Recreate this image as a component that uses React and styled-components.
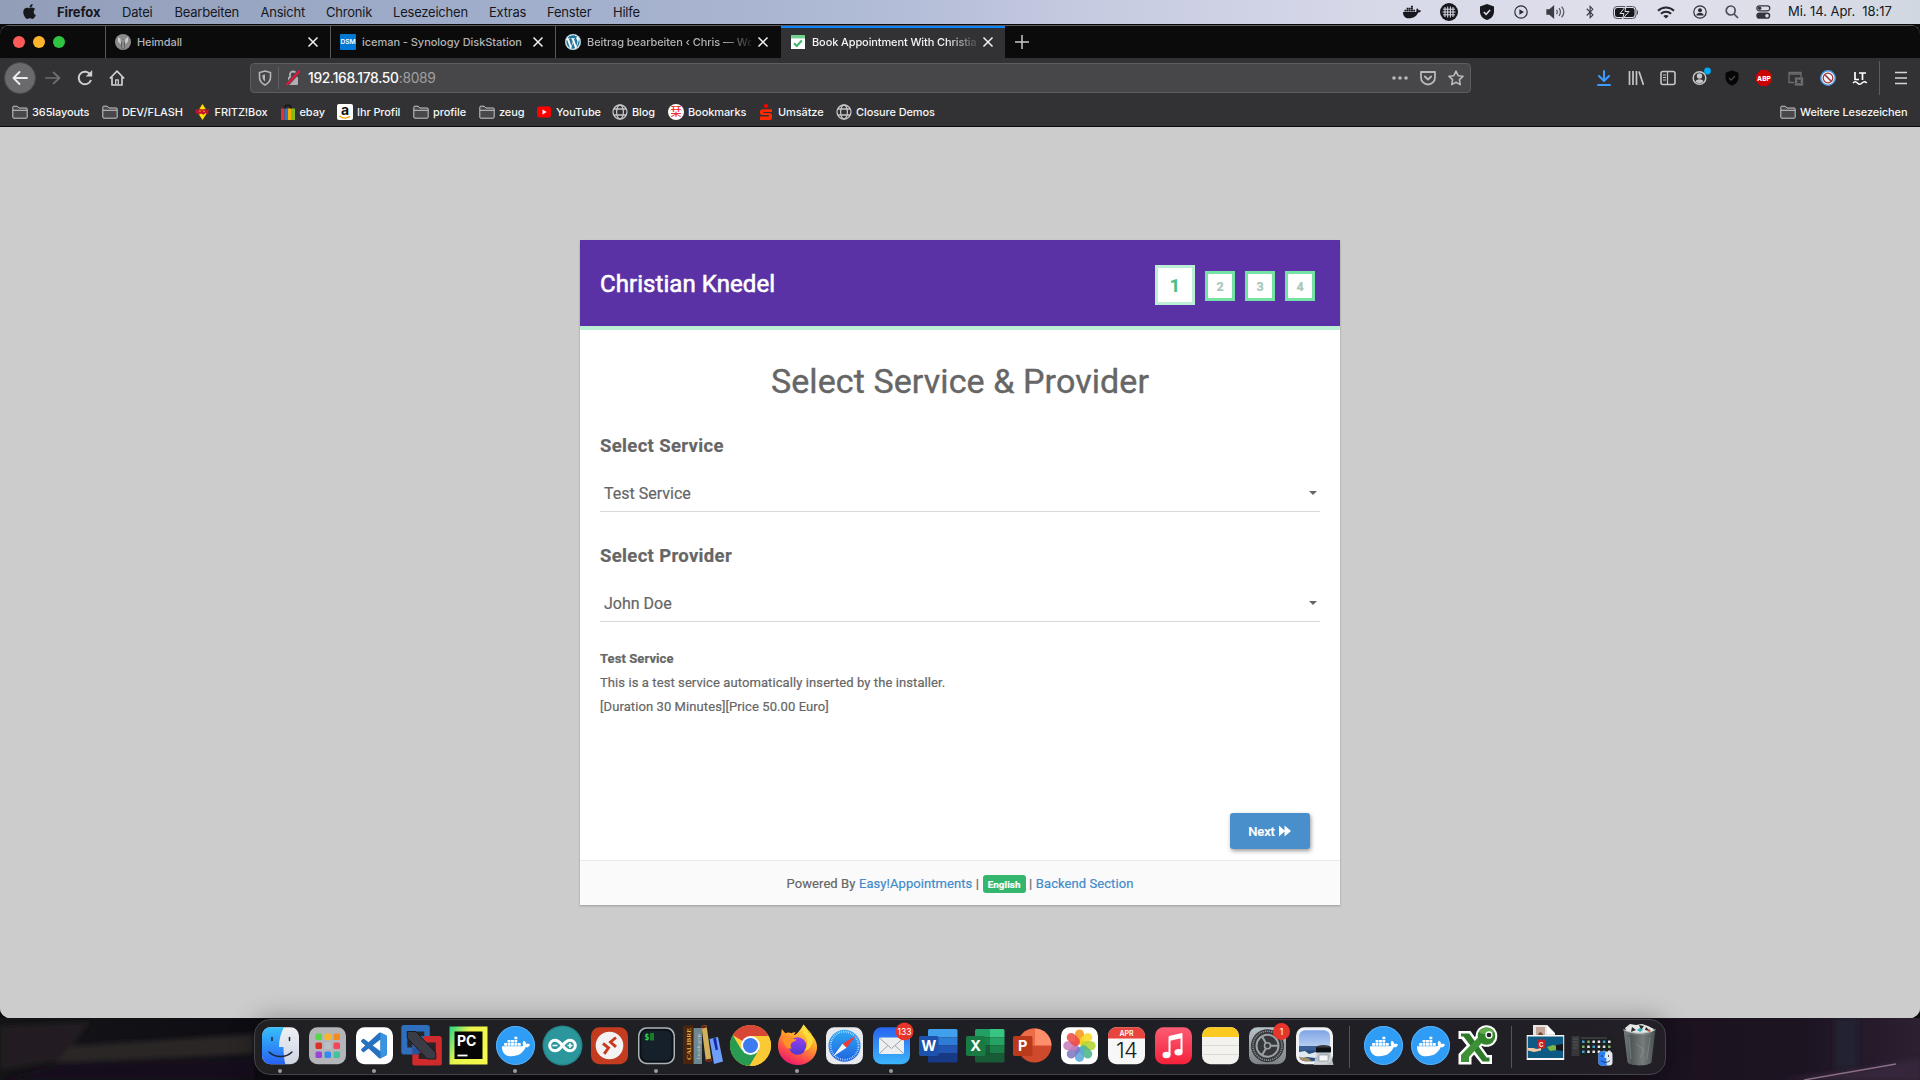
import React from "react";
import styled, { createGlobalStyle } from "styled-components";
import { FaApple, FaDocker, FaWordpress, FaBluetoothB } from "react-icons/fa";

const UI = `Inter, "Open Sans", "Liberation Sans", sans-serif`;

const Global = createGlobalStyle`
  * { box-sizing: border-box; }
  html, body { margin: 0; padding: 0; overflow: hidden; background: #0d0c10; }
  svg { display: block; flex: none; }
`;

const Desktop = styled.div`
  width: 1920px;
  height: 1080px;
  display: flex;
  flex-direction: column;
  overflow: hidden;
  background: #0c0b10;
  font-family: ${UI};
`;

/* ---------- menu bar ---------- */
const MenuBar = styled.header`
  height: 24px;
  flex: none;
  display: flex;
  align-items: center;
  justify-content: space-between;
  padding: 0 19px 0 21px;
  color: #16181d;
  font-size: 13px;
  background: linear-gradient(90deg, #929db8 0%, #9dabc8 20%, #a8b4d0 38%, #b2bcd6 46%, #c6cbe1 57%, #d6d8e8 71%, #dfdfeb 84%, #dedee9 92%, #cfd7e0 100%);
`;
const MenuGroup = styled.div`
  display: flex;
  align-items: center;
  height: 24px;
`;
const MenuItem = styled.span`
  width: ${(p) => p.$w}px;
  white-space: nowrap;
  letter-spacing: ${(p) => p.$ls ?? -0.22}px;
  font-weight: ${(p) => (p.$bold ? 700 : 400)};
  line-height: 24px;
`;
const AppleSlot = styled.span`
  width: 36px;
  padding-bottom: 2px;
`;
const TrayIcon = styled.span`
  width: ${(p) => p.$w}px;
  margin-left: ${(p) => p.$gap}px;
  display: flex;
  justify-content: center;
`;
const Clock = styled.span`
  margin-left: 17px;
  width: 113px;
  line-height: 22px;
  padding-bottom: 2px;
  white-space: pre;
  letter-spacing: -0.05px;
`;

/* ---------- browser window ---------- */
const Window = styled.main`
  height: 994px;
  flex: none;
  display: flex;
  flex-direction: column;
  border-radius: 10px;
  overflow: hidden;
  background: #ccc;
  border-top: 1px solid #08080a;
`;
const TabBar = styled.div`
  height: 33px;
  flex: none;
  display: flex;
  background: #0b0b0c;
  border-top: 1px solid #5c5c5e;
`;
const Lights = styled.div`
  width: 105px;
  padding: 10px 0 0 13px;
  display: flex;
  gap: 8px;
`;
const Light = styled.i`
  width: 12px;
  height: 12px;
  border-radius: 50%;
  background: ${(p) => p.$c};
`;
const Tab = styled.div`
  width: ${(p) => p.$w}px;
  display: flex;
  align-items: center;
  gap: 6px;
  padding: 0 ${(p) => p.$pr ?? 11}px 0 9px;
  font-size: 11px;
  font-weight: 500;
  color: ${(p) => (p.$active ? "#f4f4f5" : "#b3b3b5")};
  background: ${(p) => (p.$active ? "#323234" : "transparent")};
  border-left: ${(p) => (p.$active ? "0" : "1px solid #59595b")};
  box-shadow: ${(p) => (p.$active ? "inset 0 2px 0 #0a84ff" : "none")};
`;
const TabTitle = styled.span`
  flex: 1;
  min-width: 0;
  white-space: nowrap;
  letter-spacing: ${(p) => p.$ls ?? 0}px;
  mask-image: ${(p) => (p.$fade ? "linear-gradient(90deg, #000 82%, rgba(0, 0, 0, 0.15) 100%)" : "none")};
`;
const NewTab = styled.div`
  width: 34px;
  display: flex;
  align-items: center;
  justify-content: center;
`;

const NavBar = styled.div`
  height: 40px;
  flex: none;
  display: flex;
  align-items: center;
  padding: 0 3px 0 4px;
  background: #323234;
`;
const NavButtons = styled.div`
  width: 246px;
  display: flex;
  align-items: center;
`;
const Back = styled.span`
  width: 32px;
  height: 32px;
  margin-right: 1px;
  border-radius: 50%;
  background: #6a6a6c;
  border: 1px solid #4b4b4d;
  display: flex;
  align-items: center;
  justify-content: center;
`;
const NavIcon = styled.span`
  width: 32px;
  display: flex;
  justify-content: center;
`;
const UrlBar = styled.div`
  width: 1221px;
  height: 30px;
  display: flex;
  align-items: center;
  background: #474749;
  border: 1px solid #5d5d5f;
  border-radius: 4px;
  padding: 0 0 0 6px;
`;
const UrlIcon = styled.span`
  width: ${(p) => p.$w}px;
  display: flex;
  justify-content: center;
`;
const UrlRule = styled.i`
  width: 1px;
  height: 22px;
  margin-left: 5px;
  background: #606066;
`;
const Url = styled.span`
  flex: 1;
  margin-left: 2px;
  line-height: 17px;
  padding-top: 1px;
  font-size: 13.8px;
  letter-spacing: -0.3px;
  color: #a0a0a2;
  b { font-weight: 500; color: #fbfbfc; }
`;
const UrlActions = styled.div`
  display: flex;
  width: 84px;
`;
const ActionIcon = styled.span`
  width: 28px;
  display: flex;
  justify-content: center;
`;
const Tools = styled.div`
  flex: 1;
  display: flex;
  align-items: center;
  justify-content: flex-end;
`;
const ToolRule = styled.i`
  width: 1px;
  height: 34px;
  margin: 0 5px 0 3px;
  background: #5c5c5e;
`;

const Bookmarks = styled.div`
  height: 29px;
  flex: none;
  display: flex;
  align-items: center;
  padding: 0 11px 1px 12px;
  background: #323234;
  border-bottom: 1px solid #0a0a0b;
  color: #f5f5f6;
  font-size: 11px;
  font-weight: 500;
`;
const Bookmark = styled.span`
  width: ${(p) => p.$w}px;
  margin-left: ${(p) => (p.$end ? "auto" : 0)};
  display: flex;
  align-items: center;
  gap: 4px;
  white-space: nowrap;
  letter-spacing: -0.1px;
`;

/* ---------- booking page ---------- */
const Page = styled.section`
  flex: 1;
  display: flex;
  flex-direction: column;
  align-items: center;
  padding-top: 113px;
  background: #ccc;
  font-family: Roboto, "Liberation Sans", sans-serif;
  color: #666;
  -webkit-text-stroke: 0.2px;
`;
const Card = styled.div`
  width: 760px;
  height: 665px;
  display: flex;
  flex-direction: column;
  background: #fff;
  box-shadow: 0 1px 2px rgba(0, 0, 0, 0.24);
`;
const CardHeader = styled.div`
  height: 90px;
  flex: none;
  display: flex;
  justify-content: space-between;
  padding: 0 25px 0 20px;
  background: #5a32a5;
  border-bottom: 4px solid #bdefd5;
`;
const Company = styled.span`
  padding-top: 30px;
  font-size: 24px;
  line-height: 28px;
  letter-spacing: 0.07px;
  color: #fff;
  font-weight: 400;
  -webkit-text-stroke: 0.6px #fff;
`;
const Steps = styled.div`
  display: flex;
  gap: 10px;
  padding-top: 25px;
`;
const Step = styled.span`
  width: ${(p) => (p.$active ? 40 : 30)}px;
  height: ${(p) => (p.$active ? 40 : 30)}px;
  margin-top: ${(p) => (p.$active ? 0 : 6)}px;
  border: 3px solid ${(p) => (p.$active ? "#bdefd7" : "#75e2a5")};
  background: #fff;
  color: ${(p) => (p.$active ? "#49bd82" : "#a6c8b9")};
  font-size: ${(p) => (p.$active ? 18 : 12.5)}px;
  font-weight: 700;
  display: flex;
  align-items: center;
  justify-content: center;
  padding-top: 1px;
`;
const CardBody = styled.div`
  flex: 1;
  display: flex;
  flex-direction: column;
  padding: 0 20px;
`;
const Title = styled.h2`
  margin: 30px 0 0;
  text-align: center;
  font-size: 34px;
  line-height: 42px;
  font-weight: 400;
  letter-spacing: 0.1px;
  -webkit-text-stroke: 0.4px;
`;
const Label = styled.label`
  margin-top: ${(p) => p.$mt}px;
  font-size: 18.5px;
  letter-spacing: 0.34px;
  line-height: 24px;
  font-weight: 700;
`;
const Select = styled.div`
  height: 37px;
  margin-top: 17px;
  padding: 0 3px 0 4px;
  display: flex;
  align-items: center;
  justify-content: space-between;
  border-bottom: 1px solid #d9d9d9;
  font-size: 16px;
`;
const Caret = styled.i`
  border: 4px solid transparent;
  border-top-color: #666;
  border-bottom: 0;
`;
const Description = styled.div`
  margin-top: 25px;
  font-size: 13px;
  letter-spacing: 0.09px;
  line-height: 24px;
`;
const NextRow = styled.div`
  flex: 1;
  display: flex;
  justify-content: flex-end;
  align-items: flex-end;
  padding: 0 10px 11px 0;
`;
const NextButton = styled.button`
  width: 80px;
  height: 36px;
  padding: 0 1px 0 0;
  border: 0;
  border-radius: 3px;
  background: #488fcc;
  color: #fff;
  font: 500 13px Roboto, sans-serif;
  letter-spacing: -0.1px;
  display: flex;
  align-items: center;
  justify-content: center;
  gap: 4px;
  box-shadow: 1px 2px 4px rgba(0, 0, 0, 0.4);
`;
const Footer = styled.footer`
  height: 45px;
  flex: none;
  display: flex;
  align-items: center;
  justify-content: center;
  gap: 3.5px;
  padding-top: 1px;
  background: #fafafa;
  border-top: 1px solid #eaeaea;
  font-size: 13px;
  letter-spacing: 0.07px;
`;
const Link = styled.a`
  color: #428bca;
`;
const Language = styled.span`
  width: 43px;
  height: 18px;
  border-radius: 3px;
  background: #35b66f;
  color: #fff;
  font-size: 9.75px;
  font-weight: 700;
  display: flex;
  align-items: center;
  justify-content: center;
  padding-top: 1px;
`;

/* ---------- dock ---------- */
const DockArea = styled.div`
  height: 62px;
  flex: none;
  position: relative;
  display: flex;
  justify-content: center;
  align-items: flex-start;
  padding-top: 1px;
  background: linear-gradient(90deg, #151416 0%, #111015 8%, #0d0c12 14%, #0f0d14 80%, #1c1220 88%, #1d1422 94%, #2c2031 100%);
`;
const Wallpaper = styled.svg`
  position: absolute;
  left: 0;
  top: 0;
`;
const Dock = styled.nav`
  position: relative;
  height: 56px;
  display: flex;
  padding: 0 2px;
  border: 1px solid #454448;
  border-radius: 16px;
  background: linear-gradient(90deg, #212124 0%, #1e1f24 60%, #221f26 100%);
  box-shadow: 0 0 26px rgba(0, 0, 0, 0.32);
`;
const DockSlot = styled.svg`
  overflow: visible;
  margin-top: -1px;
`;
const DockGap = styled.i`
  width: ${(p) => p.$w}px;
  display: flex;
  justify-content: center;
  padding-top: 6px;
  &::before { content: ""; width: 1px; height: 42px; background: #55545a; }
`;

/* ---------- icons ---------- */
const Svg = ({ s = 16, w, h, children, ...p }) => (
  <svg width={w ?? s} height={h ?? s} viewBox={`0 0 ${w ?? s} ${h ?? s}`} fill="none" {...p}>{children}</svg>
);
const Close = () => (
  <Svg s={12} stroke="#f2f2f2" strokeWidth="1.5"><path d="M1.5 1.5l9 9M10.5 1.5l-9 9" /></Svg>
);
const Folder = () => (
  <Svg stroke="#c9c9cb" strokeWidth="1"><path d="M.8 13.2V3.2a1 1 0 0 1 1-1h3.4l1.6 1.8h7.4a1 1 0 0 1 1 1v8.2a1 1 0 0 1-1 1H1.8a1 1 0 0 1-1-1zM1 6.3h14" fill="#48484a" /></Svg>
);
const Globe = () => (
  <Svg stroke="#c4c4c6" strokeWidth="1.3"><circle cx="8" cy="8" r="7" /><ellipse cx="8" cy="8" rx="3.4" ry="7" /><path d="M2 5h12M2 11h12" /></Svg>
);
const Fritz = () => (
  <Svg w={17} h={16}><path d="M8.5 0l5.200 8-5.200 8-5.200-8z" fill="#ffe000" /><path d="M1 5.5l3 .2 1.5-1 3 .8 3-.8 1.5 1.2 3-.8-2 2.600 1 2.400-4-.8-1.5 1.800-2-1.600-2.500 1-1-1.600-1.800.8z" fill="#c3142d" /><path d="M5 7h2M9 7l2 .5" stroke="#ffe000" strokeWidth=".7" /></Svg>
);
const Ebay = () => (
  <Svg><path d="M5 5V3.200C5 .6 11 .6 11 3.200V5" stroke="#151515" strokeWidth="1.600" /><path d="M1 4.500h3.500V16H1z" fill="#e43137" /><path d="M4.500 4.500H8V16H4.500z" fill="#2f78c4" /><path d="M8 4.500h3.800V16H8z" fill="#f5af02" /><path d="M11.800 4.500H15V16h-3.200z" fill="#86b817" /></Svg>
);
const Amazon = () => (
  <Svg overflow="visible"><rect width="16" height="16" rx="2" fill="#fff" /><text x="8" y="10.800" textAnchor="middle" fontSize="14" fontWeight="700" fontFamily={UI} fill="#111">a</text><path d="M2.500 12c3.500 2.600 7.500 2.500 10.500.4" stroke="#f90" strokeWidth="1.300" /></Svg>
);
const YouTube = () => (
  <Svg><rect x="1" y="2.500" width="14" height="11" rx="2.500" fill="#f00" /><path d="M6.500 5.600v5l4.200-2.500z" fill="#fff" /></Svg>
);
const BookmarksLogo = () => (
  <Svg overflow="visible"><circle cx="8" cy="8" r="8" fill="#fff" /><text x="8" y="12" textAnchor="middle" fontSize="11" fontFamily="Noto Sans CJK JP, sans-serif" fill="#f03030">栞</text></Svg>
);
const Sparkasse = () => (
  <Svg><circle cx="8" cy="2" r="2" fill="#f00" /><path d="M14 5.200H4.600A2.600 2.600 0 0 0 2 7.800v.6A2.600 2.600 0 0 0 4.600 11h6.200v1.400H2V16h9.400A2.600 2.600 0 0 0 14 13.400v-2A2.600 2.600 0 0 0 11.400 9H5.500V7.900H14z" fill="#ff2a00" /></Svg>
);
const HeimdallLogo = () => (
  <Svg><circle cx="8" cy="8" r="8" fill="#8b8b8b" /><path d="M3 3c-.5 4 .5 6 3 7l-.5-5zM13 3c.5 4-.5 6-3 7l.5-5z" fill="#d0d0d0" /><path d="M6 9l2-4 2 4-.5 5.500h-3z" fill="#555" /><path d="M8 6v8" stroke="#c5c5c5" /></Svg>
);
const DsmLogo = () => (
  <Svg><rect width="16" height="16" rx="1" fill="#0078d4" /><text x="8" y="10.400" textAnchor="middle" fontSize="6.600" fontWeight="600" fontFamily={UI} fill="#fff">DSM</text></Svg>
);
const WpLogo = () => (
  <Svg><circle cx="8" cy="8" r="8" fill="#fff" /><FaWordpress size={16} color="#21759b" /></Svg>
);
const BookingLogo = () => (
  <Svg><rect x="1" y="1" width="14" height="14" fill="#fff" /><rect x="1" y="1" width="14" height="3.400" fill="#6fd08f" /><path d="M4 9.200l2.800 2.800 5-5.500" stroke="#3cb56c" strokeWidth="2" /></Svg>
);

const Tray = () => (
  <>
    <TrayIcon $w={20} $gap={0}><FaDocker size={18} /></TrayIcon>
    <TrayIcon $w={18} $gap={18}><Svg s={18}><circle cx="9" cy="9" r="9" fill="#16181d" /><path d="M3 6.200h12M2.500 9h13M3 11.800h12M5 4v10M7.700 3.500v11M10.400 3.500v11M13 4v10" stroke="#dcdce8" strokeWidth="1" /></Svg></TrayIcon>
    <TrayIcon $w={16} $gap={21}><Svg><path d="M8 0l7 2.500v5C15 12 12 14.800 8 16 4 14.800 1 12 1 7.500v-5z" fill="#16181d" /><path d="M4.800 8l2.300 2.300 4-4.300" stroke="#dcdce8" strokeWidth="1.500" /></Svg></TrayIcon>
    <TrayIcon $w={14} $gap={19.5}><Svg s={14} stroke="#2b2d33" strokeWidth="1.200"><circle cx="7" cy="7" r="6.200" /><path d="M5.400 4.200v5.600L10 7z" fill="#2b2d33" stroke="none" /></Svg></TrayIcon>
    <TrayIcon $w={20} $gap={17.5}><Svg w={20} h={14} strokeWidth="1.300"><path d="M1 5h2.500L7.500 1.500v11L3.500 9H1z" fill="#3b3d45" stroke="#3b3d45" /><path d="M10.500 4.800c1 1.400 1 3 0 4.400M13 3.200c1.800 2.300 1.800 5.300 0 7.600M15.700 1.600c2.600 3.300 2.600 7.500 0 10.800" stroke="#5b5d67" /></Svg></TrayIcon>
    <TrayIcon $w={12} $gap={18}><FaBluetoothB size={14} color="#3b3d45" /></TrayIcon>
    <TrayIcon $w={26} $gap={17.5}><Svg w={26} h={13}><rect x=".5" y=".5" width="22.500" height="12" rx="3.500" stroke="#54565e" /><rect x="2" y="2" width="19.500" height="9" rx="2.200" fill="#16181d" /><path d="M13 0L7 7.500h4L9.500 13l6.500-7.500h-4z" fill="#16181d" stroke="#dcdce8" strokeWidth="1" /><path d="M24.500 4.500v4" stroke="#54565e" /></Svg></TrayIcon>
    <TrayIcon $w={18} $gap={17.5}><Svg w={18} h={13} stroke="#26282e" strokeWidth="1.900"><path d="M1 4.800c4.500-4.400 11.500-4.400 16 0M3.900 7.800c2.900-2.800 7.300-2.800 10.200 0" /><path d="M9 12.500L6.300 9.900c1.600-1.300 3.800-1.300 5.400 0z" fill="#26282e" stroke="none" /></Svg></TrayIcon>
    <TrayIcon $w={14} $gap={18}><Svg s={14}><circle cx="7" cy="7" r="6.200" stroke="#2b2d33" strokeWidth="1.200" /><circle cx="7" cy="5.300" r="2" fill="#2b2d33" /><path d="M3.300 10.500c0-3.600 7.400-3.600 7.400 0z" fill="#2b2d33" /></Svg></TrayIcon>
    <TrayIcon $w={14} $gap={18.5}><Svg s={14} stroke="#4b4d55" strokeWidth="1.700"><circle cx="5.700" cy="5.500" r="4.500" /><path d="M9 9l4 4" /></Svg></TrayIcon>
    <TrayIcon $w={15} $gap={17}><Svg w={15} h={14}><rect x=".8" y=".8" width="13" height="5" rx="2.500" stroke="#33353c" strokeWidth="1.200" /><circle cx="3.600" cy="3.300" r="1.800" fill="#33353c" /><rect x=".3" y="7.600" width="14" height="6.200" rx="3.100" fill="#33353c" /><circle cx="11" cy="10.700" r="1.800" fill="#dcdce8" /></Svg></TrayIcon>
  </>
);

const tabs = [
  { title: "Heimdall", icon: <HeimdallLogo />, w: 225, ls: -0.1 },
  { title: "iceman - Synology DiskStation", icon: <DsmLogo />, w: 225, ls: -0.04 },
  { title: "Beitrag bearbeiten ‹ Chris — Wo", icon: <WpLogo />, w: 226, pr: 12, fade: true, ls: -0.08 },
  { title: "Book Appointment With Christia", icon: <BookingLogo />, w: 224, fade: true, active: true, ls: -0.11 },
];
const menus = [["Datei", 52.5], ["Bearbeiten", 86], ["Ansicht", 65.5], ["Chronik", 67], ["Lesezeichen", 96], ["Extras", 58], ["Fenster", 66], ["Hilfe", 40]];
const bookmarks = [
  ["365layouts", <Folder />, 90], ["DEV/FLASH", <Folder />, 91.5], ["FRITZ!Box", <Fritz />, 86], ["ebay", <Ebay />, 57.5],
  ["Ihr Profil", <Amazon />, 76], ["profile", <Folder />, 66], ["zeug", <Folder />, 57], ["YouTube", <YouTube />, 76],
  ["Blog", <Globe />, 56], ["Bookmarks", <BookmarksLogo />, 90], ["Umsätze", <Sparkasse />, 78], ["Closure Demos", <Globe />, 110],
];

const Whale = ({ deep = "#2f9cf5" }) => (
  <>
    <circle cx="23.500" cy="26.500" r="19.500" fill={deep} />
    <circle cx="23.500" cy="26.500" r="19" stroke="#6db8f5" strokeWidth=".7" />
    <FaDocker x={10} y={13.5} size={28} color="#fff" />
  </>
);
const Badge = ({ children, wide }) => (
  <g>
    <circle cx={wide ? 36.5 : 37.5} cy="12.500" r={wide ? 9 : 8.5} fill="#e8352c" />
    <text x={wide ? 36.5 : 37.5} y="15.800" textAnchor="middle" fontSize={wide ? 8.5 : 9.5} fontFamily={UI} fill="#fff">{children}</text>
  </g>
);
const Tile = ({ fill }) => <rect x="5" y="8.300" width="37" height="37" rx="8.500" fill={fill} />;
const Grad = ({ id, a, b, h }) => (
  <linearGradient id={id} x1="0" y1="0" x2={h ? 1 : 0} y2={h ? 0 : 1}><stop stopColor={a} /><stop offset="1" stopColor={b} /></linearGradient>
);
const Office = ({ letter, box, shades }) => (
  <g transform="translate(-1 0)">
    <clipPath id={`of${letter}`}><rect x="14" y="10" width="29.500" height="33.500" rx="1.500" /></clipPath>
    <g clipPath={`url(#of${letter})`}>
      {shades.map(([x, y, w, h, c], i) => <rect key={i} x={x} y={y} width={w} height={h} fill={c} />)}
    </g>
    <rect x="5" y="17" width="19.500" height="20" rx="1.800" fill={box} />
    <text x="14.700" y="31.800" textAnchor="middle" fontSize="14.500" fontWeight="700" fontFamily={UI} fill="#fff">{letter}</text>
  </g>
);

const petals = ["#f7981d", "#f9d923", "#b3d334", "#4fb58a", "#58a8dd", "#8079c4", "#c77dbb", "#ee4b46"];
const pads = ["#57d64b", "#fbb526", "#f58a1d", "#dc2f26", "#b9c0c7", "#f4445c", "#9a45d8", "#2f8df5", "#45c39c"];

const dockLeft = [
  { dot: true, art: <><defs><Grad id="fi" a="#36c0fc" b="#2760f2" /><Grad id="fg" a="#eef0f4" b="#cfd4e2" /><clipPath id="fc"><rect x="5" y="8.300" width="37" height="37" rx="8.500" /></clipPath></defs><g clipPath="url(#fc)"><rect x="5" y="8" width="37" height="38" fill="url(#fg)" /><path d="M5 8h22c-3 6-5 12-5 20h4.500c0 6 .5 12 2 18H5z" fill="url(#fi)" /></g><path d="M15 18.500v3M32.500 18.500v3M12 33c6 6 17 6 23 0" stroke="#1c2638" strokeWidth="1.500" strokeLinecap="round" /></> },
  { art: <><Tile fill="#b4b5b8" />{pads.map((c, i) => <rect key={i} x={11.5 + (i % 3) * 9} y={14.5 + Math.floor(i / 3) * 9} width="6.500" height="6.500" rx="1.500" fill={c} />)}</> },
  { dot: true, art: <><Tile fill="#fff" /><g transform="translate(10 13.500) scale(1.080)"><path d="M23.150 2.587L18.210.21a1.494 1.494 0 0 0-1.705.29l-9.460 8.630-4.120-3.128a.999.999 0 0 0-1.276.057L.327 7.261A1 1 0 0 0 .326 8.740L3.899 12 .326 15.260a1 1 0 0 0 .001 1.479L1.650 17.940a.999.999 0 0 0 1.276.057l4.120-3.128 9.460 8.630a1.492 1.492 0 0 0 1.704.290l4.942-2.377A1.500 1.500 0 0 0 24 20.060V3.939a1.500 1.500 0 0 0-.850-1.352zm-5.146 14.861L10.826 12l7.178-5.448v10.896z" fill="#2472c0" /><path d="M18 .1l5.200 2.500A1.500 1.500 0 0 1 24 3.940v16.120a1.500 1.500 0 0 1-.85 1.350L18 23.900z" fill="#3b94e0" /></g></> },
  { art: <g transform="translate(-.7 0)"><rect x="4" y="6" width="28.500" height="29.500" rx="2.500" fill="#2f6fbd" /><rect x="15" y="17" width="29.500" height="29.500" rx="2.500" fill="#cf2a2c" /><path d="M15 17h12.500L15 33z" fill="#2a62ae" /><path d="M15 29h7v6.500h-7z" fill="#24559d" /><path d="M10 12.500h17V17H15v11.500h-5z" fill="#25272f" /><path d="M26 23.500h12.500v16.500H21.500V34H26z" fill="#2b2326" /><path d="M10 12.500h8.500L38.500 34v6H30L10 19z" fill="#3a3d46" stroke="#1b1c22" strokeWidth="1" /></g> },
  { art: <><defs><linearGradient id="py" x1="0" y1="0" x2="1" y2=".5"><stop stopColor="#21d789" /><stop offset=".45" stopColor="#e8f34c" /><stop offset="1" stopColor="#f6f84a" /></linearGradient></defs><rect x="4.500" y="7.500" width="38" height="38" fill="url(#py)" /><rect x="9.500" y="12.500" width="28" height="27.500" fill="#050505" /><text x="12" y="26.500" fontSize="14" fontWeight="700" fontFamily={UI} fill="#fff">PC</text><path d="M12.500 36.500h10" stroke="#fff" strokeWidth="1.800" /></> },
  { dot: true, art: <Whale /> },
  { art: <><circle cx="23.500" cy="26.500" r="20" fill="#23848a" /><circle cx="23.500" cy="26.500" r="18.600" fill="#2b979c" /><path d="M23.500 26.500c-3-4-5.200-5.300-7.500-5.300a5.300 5.300 0 0 0 0 10.600c2.300 0 4.500-1.300 7.500-5.300 3-4 5.200-5.300 7.500-5.300a5.300 5.300 0 0 1 0 10.600c-2.300 0-4.500-1.300-7.500-5.300z" stroke="#fff" strokeWidth="3" /><path d="M13.500 26.500h5M28.500 26.500h5M31 24v5" stroke="#fff" strokeWidth="1.500" /></> },
  { art: <><Tile fill="#c43c20" /><circle cx="23.500" cy="26.500" r="13.800" fill="#f3f1f1" /><path d="M17 24.500l5.500 4.300-4.300 6M30 18.500l-5.500 4.500 5.500 4.800" stroke="#c43c20" strokeWidth="2.900" /></> },
  { dot: true, art: <><Tile fill="#a8b3b7" /><rect x="6.500" y="9.700" width="34" height="34" rx="7.500" fill="#0d1115" /><rect x="8.500" y="11.700" width="30" height="30" rx="5.500" fill="#16202a" /><text x="11.500" y="21" fontSize="8" fontWeight="700" fontFamily="DejaVu Sans Mono, monospace" fill="#2ee04b">$</text><rect x="17" y="14" width="4" height="7.500" fill="#177d2b" /></> },
  { art: <><rect x="3" y="6.500" width="10" height="38.500" fill="#4b240c" /><text transform="translate(11 41) rotate(-90)" fontSize="7" fontWeight="700" fontFamily="Liberation Serif, serif" fill="#e8b04b">CALIBRE</text><rect x="13.500" y="9" width="8.500" height="36" fill="#6d8790" /><text transform="translate(19.500 40) rotate(-90)" fontSize="5" fontFamily="Liberation Serif, serif" fill="#d0dce0">Lucida grypr</text><path d="M21.500 7l5-1 5 36-5.500 1z" fill="#d3b05c" /><path d="M21.500 7l5-1 .4 2.500-5 1zM25.700 40.500l5.500-1 .4 2.700-5.500 1z" fill="#6a2118" /><path d="M29.500 20l8.500-2 5 24.500-9 2.500z" fill="#6ea0fb" /><path d="M33 19.500l3-.8 2 12-2.300.5z" fill="#1c27a8" /></> },
  { art: <><circle cx="23.500" cy="26.500" r="20.500" fill="#ffcf3f" /><path d="M23.500 26.500L5.750 16.250a20.500 20.500 0 0 1 35.500 0z" fill="#d84636" /><path d="M23.500 26.500L41.250 16.250l-18-.2z" fill="#d84636" /><path d="M5.750 16.250A20.500 20.500 0 0 0 22.600 47l9.400-16.300-8.500-4.200-9 4.300z" fill="#279b52" /><path d="M23.500 17h18.100a20.500 20.500 0 0 1-19 30l9.600-16z" fill="#fbc934" /><circle cx="23.500" cy="26.500" r="9.400" fill="#fff" /><circle cx="23.500" cy="26.500" r="7.500" fill="#3f7bf0" /></> },
  { dot: true, art: <><defs><linearGradient id="ff" x1=".8" y1="0" x2=".3" y2="1"><stop stopColor="#fff04a" /><stop offset=".4" stopColor="#ffa32b" /><stop offset=".75" stopColor="#ff4a4c" /><stop offset="1" stopColor="#e5176f" /></linearGradient><Grad id="fp" a="#9a3df0" b="#4b3bd0" /></defs><path d="M29.500 5.500c3 3 4.500 6 5 9 1.500-.2 2 .2 3 1.500 3.500 3.500 6 8 5.500 13.500C42 39 34 46 24 46 12.500 46 4.500 38 4 28c-.2-5 1.200-9.500 3-12l.8-6 3.500 4.200c2-.8 4.500-.8 6 0 1.500-1 3-1.200 4.200-1l-1.700 3c3.500-1 6-4.500 9.700-10.700z" fill="url(#ff)" /><circle cx="23.500" cy="27" r="8.800" fill="url(#fp)" /><path d="M8 21c3-3 6-2.500 9-1.500 3 .5 5 .5 5.500 1-1 2-3.500 2-5 3.500-1.500 2-1 4 .2 5.500-4 .5-6-1-6.700-3z" fill="#ff9326" /><path d="M29.500 5.500c-3 7 1.500 10 3 14.500 1.700 5.500 0 9.500-2.500 12 6-1.500 9.500-7 9-13-1-6-6.500-9-9.500-13.500z" fill="#ffdf3a" opacity=".85" /></> },
  { art: <><defs><Grad id="sa" a="#2da8f4" b="#1f63e0" /></defs><Tile fill="#e9eaee" /><circle cx="23.500" cy="26.700" r="16" fill="url(#sa)" /><circle cx="23.500" cy="26.700" r="14" stroke="#e0efff" strokeWidth="2" strokeDasharray=".6 1.230" /><path d="M35 16.500L21.500 24.700l4 4z" fill="#f03b36" /><path d="M12 37.500l9.500-12.800 4 4z" fill="#f4f6fa" /></> },
  { dot: true, art: <><defs><Grad id="ml" a="#2864f0" b="#3cb6fb" /></defs><Tile fill="url(#ml)" /><rect x="11" y="18.500" width="25" height="16.500" rx="1.800" fill="#eceef0" /><path d="M11.500 19l12 10.500 12-10.500M11.500 34.500l8.500-8M35.500 34.500l-8.500-8" stroke="#a0a6ae" strokeWidth="1" /><Badge wide>133</Badge></> },
  { art: <Office letter="W" box="#1c51ae" shades={[[14, 10, 30, 8.500, "#41a0ec"], [14, 18.500, 30, 8, "#2d7cd6"], [14, 26.500, 30, 8, "#2256b4"], [14, 34.500, 30, 10, "#173a86"]]} /> },
  { art: <Office letter="X" box="#177b43" shades={[[14, 10, 15, 8.500, "#239f64"], [29, 10, 15, 8.500, "#38c583"], [14, 18.500, 15, 8, "#1a7f49"], [29, 18.500, 15, 8, "#25a365"], [14, 26.500, 15, 8, "#185c37"], [29, 26.500, 15, 8, "#1a7f49"], [14, 34.500, 30, 10, "#185c37"]]} /> },
  { art: <g transform="translate(-1 0)"><circle cx="26.500" cy="26.500" r="17" fill="#cf4a2c" /><path d="M26.500 26.500v-17a17 17 0 0 1 17 17z" fill="#ff8f6b" /><path d="M26.500 26.500v-17a17 17 0 0 0-17 17z" fill="#ec6c47" /><rect x="5" y="17" width="19.500" height="20" rx="1.800" fill="#bb3a1c" /><text x="14.700" y="31.800" textAnchor="middle" fontSize="14.500" fontWeight="700" fontFamily={UI} fill="#fff">P</text></g> },
  { art: <><Tile fill="#fff" />{petals.map((c, i) => <rect key={i} x="19" y="10.500" width="9" height="15" rx="4.500" fill={c} opacity=".88" transform={`rotate(${i * 45} 23.500 26.700)`} />)}</> },
  { art: <><Tile fill="#f7f7f7" /><path d="M5 19.500v-2.700a8.500 8.500 0 0 1 8.500-8.500h20a8.500 8.500 0 0 1 8.500 8.500v2.700z" fill="#e6443c" /><text x="23.500" y="16.900" textAnchor="middle" fontSize="7" fontWeight="600" fontFamily={UI} fill="#fff">APR</text><text x="23.500" y="38.700" textAnchor="middle" fontSize="22" fontWeight="300" letterSpacing="-.8" fontFamily={UI} fill="#222">14</text></> },
  { art: <><defs><Grad id="mu" a="#fb5c74" b="#f5213a" /></defs><Tile fill="url(#mu)" /><path d="M19.500 36V18.500l12-2.700V33" stroke="#fff" strokeWidth="2" /><path d="M19 17l13-3v5l-13 3z" fill="#fff" /><ellipse cx="16.500" cy="36" rx="4" ry="3.200" fill="#fff" /><ellipse cx="28.500" cy="33.200" rx="4" ry="3.200" fill="#fff" /></> },
  { art: <><Tile fill="#f3f2ef" /><path d="M5 18v-1.200a8.500 8.500 0 0 1 8.500-8.500h20a8.500 8.500 0 0 1 8.500 8.500V18z" fill="#fcc921" /><path d="M5 26.500h37M5 35.500h37" stroke="#d2d1ce" strokeWidth=".7" /></> },
  { art: <><defs><Grad id="se" a="#b7c2c9" b="#7e8488" /></defs><Tile fill="url(#se)" /><circle cx="23.500" cy="26.700" r="16.500" fill="#35373b" /><circle cx="23.500" cy="26.700" r="14.500" stroke="#8a8e92" strokeWidth="1.600" strokeDasharray="1.200 .9" /><circle cx="23.500" cy="26.700" r="11" stroke="#9ca1a5" strokeWidth="2" /><circle cx="23.500" cy="26.700" r="3" stroke="#9ca1a5" strokeWidth="1.600" /><path d="M26.500 26.700h8M22 24.200l-4-7M22 29.200l-4 7" stroke="#9ca1a5" strokeWidth="2" /><Badge>1</Badge></> },
  { art: <><defs><Grad id="pv" a="#7fa4e6" b="#c3d6f3" /><clipPath id="pc"><rect x="8" y="11.300" width="31" height="31" rx="6" /></clipPath></defs><Tile fill="#f1f2f5" /><g clipPath="url(#pc)"><rect x="8" y="11" width="31" height="20" fill="url(#pv)" /><rect x="8" y="27" width="31" height="5" fill="#3c5f97" /><rect x="8" y="31.500" width="31" height="12" fill="#2a4f7c" /><path d="M8 33l6-1 4 3 7-2 4 3-5 3-8-1-8 2z" fill="#dfe9ee" /><path d="M8 38l9 1 6 5H8z" fill="#a58d63" /></g><ellipse cx="32.500" cy="28.500" rx="7.500" ry="2.500" fill="#3a3c40" /><path d="M25 28.500h15v5H25z" fill="#101113" /><path d="M25.500 33.500h14l3 12.500H22.500z" fill="#c8ced3" opacity=".9" /><path d="M28 36h9v6h-9z" fill="#f5f7f8" stroke="#777" strokeWidth=".5" /></> },
];
const dockMid = [
  { art: <Whale /> },
  { art: <Whale /> },
  { art: <g transform="translate(-1.500 0)" strokeLinejoin="miter"><circle cx="34" cy="17" r="10.800" fill="#fff" /><path d="M6 12h12l17 24h4.500v9H29L9 20H6z" fill="#fff" /><path d="M6 45.500V35L26 14l8 7.500-15 17v7z" fill="#fff" /><path d="M8.500 14.500h8.200l17.300 24h3v4h-7L11 17.500H8.500z" fill="#2f7a2a" /><path d="M8.500 43v-7L27 17l4.500 4.500L16.500 38v5z" fill="#3f9138" /><circle cx="34" cy="17" r="8.800" fill="#33852d" /><path d="M26.500 13a8.800 8.800 0 0 1 15 0c-3 3-12 3-15 0z" fill="#60ab4c" /><circle cx="36.500" cy="16" r="3" fill="#222" stroke="#fff" strokeWidth="1.300" /></g> },
];
const dockRight = [
  { art: <><path d="M11 6h14l8 8v3H11z" fill="#e8e6e4" /><path d="M25 6l8 9h-8z" fill="#fff" /><rect x="14" y="8" width="9" height="9" fill="#c4a79a" /><path d="M16 17c0-5 5-5 5 0z" fill="#704634" /><rect x="4.700" y="16" width="37.500" height="25" fill="#f8f8f8" /><rect x="5.700" y="17.500" width="35.500" height="21.500" fill="#0d5b84" /><rect x="15.500" y="20.500" width="7.500" height="9" rx="1" fill="#c62026" /><text x="19.200" y="27.500" textAnchor="middle" fontSize="6" fontWeight="700" fontFamily={UI} fill="#fff">C</text><path d="M6 29h5l4 1 4-1v2.500l-7 1.500-6-1.500z" fill="#f0c9a5" /><path d="M25 28l6-2 4 1v4l-7 1z" fill="#7ab648" /><path d="M34 26l7-1v7l-7-1z" fill="#16181c" /></> },
  { art: <><rect x="2.500" y="17" width="41.500" height="20" rx="1" fill="#1e1f21" /><rect x="2.500" y="17" width="8" height="20" fill="#37383b" /><path d="M4 20h5M4 23h5M4 26h5M4 29h4M12 19h26" stroke="#606267" strokeWidth=".8" />{[0, 1, 2].map((r) => [0, 1, 2, 3, 4, 5].map((c) => <rect key={`${r}${c}`} x={13 + c * 5.2} y={21.5 + r * 5} width="2.600" height="2.600" rx=".5" fill={(r * 6 + c) % 4 === 0 ? "#3aa5d8" : (r + c) % 5 === 1 ? "#78b36a" : "#e4e4e4"} />))}<clipPath id="fs"><rect x="29.500" y="32.500" width="14" height="14" rx="3.200" /></clipPath><g clipPath="url(#fs)"><rect x="29" y="32" width="15" height="15" fill="#e3e7f0" /><path d="M29 32h8c-1 3-1.500 5-1.500 7h1.800c0 3 .2 5 .7 8h-9z" fill="#2b7ef6" /></g><path d="M33 36v2M39.500 36v2M32 41.500c3 2.500 6.500 2.500 9 0" stroke="#1c2638" strokeWidth=".8" /></> },
  { art: <><defs><linearGradient id="tr" x1="0" y1="0" x2="1" y2="0"><stop stopColor="#7d8585" /><stop offset=".25" stopColor="#565c5d" /><stop offset=".6" stopColor="#7c8383" /><stop offset="1" stopColor="#4c5253" /></linearGradient></defs><path d="M9 9l5-4 6 1 6-1 6 2 6 3-3 6H12z" fill="#e6e6e6" /><path d="M16 8l4 3-5 2zM30 8l4 4-5-1zM23 6l2 5 3-4z" fill="#2c2c2e" /><path d="M21 11l3 2 3-2-3-2z" fill="#2fb3b8" /><path d="M31 12l3-2 1 4z" fill="#c8472f" /><path d="M7.500 10.500c8 5 24 5 32 0L35.500 43c-1 4.500-23 4.500-24 0z" fill="url(#tr)" opacity=".93" /><path d="M7.500 10.500c8 5 24 5 32 0" stroke="#b9c0c0" strokeWidth="1" /><path d="M13 18l2 22M34 18l-3 22M20 25l8 6-4 8" stroke="#a7b0b0" strokeWidth=".7" opacity=".5" /></> },
];
const DockApp = ({ art, dot }) => (
  <DockSlot width="47" height="56" viewBox="0 0 47 56" fill="none">
    {art}
    {dot && <circle cx="23" cy="52" r="2" fill="#9b9ba0" />}
  </DockSlot>
);

export default function App() {
  return (
    <Desktop>
      <Global />
      <MenuBar>
        <MenuGroup>
          <AppleSlot><FaApple size={17} /></AppleSlot>
          <MenuItem $w={65} $bold $ls={-0.1}>Firefox</MenuItem>
          {menus.map(([name, w]) => <MenuItem key={name} $w={w}>{name}</MenuItem>)}
        </MenuGroup>
        <MenuGroup>
          <Tray />
          <Clock>Mi. 14. Apr.  18:17</Clock>
        </MenuGroup>
      </MenuBar>

      <Window>
        <TabBar>
          <Lights><Light $c="#fc5b57" /><Light $c="#fdb42c" /><Light $c="#2fc540" /></Lights>
          {tabs.map((t) => (
            <Tab key={t.title} $w={t.w} $pr={t.pr} $active={t.active}>
              {t.icon}
              <TabTitle $fade={t.fade} $ls={t.ls}>{t.title}</TabTitle>
              <Close />
            </Tab>
          ))}
          <NewTab><Svg s={14} stroke="#c8c8ca" strokeWidth="1.500"><path d="M7 0v14M0 7h14" /></Svg></NewTab>
        </TabBar>

        <NavBar>
          <NavButtons>
            <Back><Svg stroke="#ececee" strokeWidth="1.900" strokeLinecap="round" strokeLinejoin="round"><path d="M15 8H1.500M7.500 2L1.500 8l6 6" /></Svg></Back>
            <NavIcon><Svg stroke="#6f6f71" strokeWidth="1.700" strokeLinecap="round" strokeLinejoin="round"><path d="M1 8h13.500M8.500 2.500L14.500 8l-6 5.500" /></Svg></NavIcon>
            <NavIcon><Svg stroke="#cfcfd1" strokeWidth="2"><path d="M13.500 4.800A6.300 6.300 0 1 0 14 10" /><path d="M15.200 0v6.500H8.700z" fill="#cfcfd1" stroke="none" /></Svg></NavIcon>
            <NavIcon><Svg stroke="#cfcfd1" strokeWidth="1.700" strokeLinejoin="round"><path d="M.8 8.500L8 1.200l7.200 7.300M3 7v8h10V7" /><path d="M6.700 14.500v-4.700h2.600v4.700" strokeWidth="1.300" /></Svg></NavIcon>
          </NavButtons>
          <UrlBar>
            <UrlIcon $w={16}><Svg stroke="#b6b6b8" strokeWidth="1.600"><path d="M8 1l5.500 1.500v4.700c0 3.800-2.300 6.200-5.500 7.800-3.200-1.600-5.500-4-5.500-7.800V2.500z" /><path d="M8 4.500v7c-2-1.500-2.500-3-2.500-5V5z" fill="#b6b6b8" stroke="none" /></Svg></UrlIcon>
            <UrlRule />
            <UrlIcon $w={27}><Svg><path d="M5 7V4.500a3 3 0 0 1 6 0V7" stroke="#b0b0b2" strokeWidth="1.800" /><rect x="3" y="6.700" width="10" height="8.300" rx="1.200" fill="#b0b0b2" /><path d="M1.500 15L14.500 1" stroke="#474749" strokeWidth="4" /><path d="M1.500 15.200L14.500 1" stroke="#f0143c" strokeWidth="1.900" /></Svg></UrlIcon>
            <Url><b>192.168.178.50</b>:8089</Url>
            <UrlActions>
              <ActionIcon><Svg><circle cx="2" cy="8" r="1.800" fill="#b9b9bb" /><circle cx="8" cy="8" r="1.800" fill="#b9b9bb" /><circle cx="14" cy="8" r="1.800" fill="#b9b9bb" /></Svg></ActionIcon>
              <ActionIcon><Svg stroke="#b9b9bb" strokeWidth="1.800" strokeLinejoin="round" strokeLinecap="round"><path d="M1 2h14v5.500a7 7 0 0 1-14 0zM4.800 6.500L8 9.500l3.200-3" /></Svg></ActionIcon>
              <ActionIcon><Svg stroke="#b9b9bb" strokeWidth="1.600" strokeLinejoin="round"><path d="M8 1.200l2.100 4.500 4.900.6-3.600 3.400.9 4.900L8 12.200l-4.300 2.400.9-4.900L1 6.300l4.900-.6z" /></Svg></ActionIcon>
            </UrlActions>
          </UrlBar>
          <Tools>
            <NavIcon><Svg stroke="#3f9bff" strokeWidth="2" strokeLinecap="round" strokeLinejoin="round"><path d="M8 1v9.500M3 6l5 5 5-5M2 15h12" /></Svg></NavIcon>
            <NavIcon><Svg stroke="#c6c6c8" strokeWidth="1.700"><path d="M1.500 1v14M5 1v14M8.500 1v14M11 1.500l4.500 13.500" /></Svg></NavIcon>
            <NavIcon><Svg stroke="#c6c6c8" strokeWidth="1.600"><rect x="1" y="1.500" width="14" height="13" rx="2" /><path d="M7.500 2v12M3 5h3M3 7.500h3M3 10h3" strokeWidth="1.200" /></Svg></NavIcon>
            <NavIcon><Svg overflow="visible"><circle cx="7.500" cy="8" r="6.300" stroke="#c6c6c8" strokeWidth="1.500" /><circle cx="7.500" cy="6" r="2.700" fill="#c6c6c8" /><path d="M3.500 11.500c1-3 7-3 8 0-2 2.300-6 2.300-8 0z" fill="#c6c6c8" /><circle cx="15.500" cy="1" r="3.400" fill="#00a8f5" /></Svg></NavIcon>
            <NavIcon><Svg><path d="M8 .5l6.500 2.300v4.700c0 4-2.500 6.800-6.500 8-4-1.200-6.500-4-6.500-8V2.800z" fill="#050505" /><path d="M5 8l2.200 2.200L11 6" stroke="#4a4a4c" strokeWidth="1.200" /></Svg></NavIcon>
            <NavIcon><Svg><path d="M4.700 0h6.600L16 4.700v6.600L11.300 16H4.700L0 11.300V4.700z" fill="#cb0000" /><text x="8" y="10.600" textAnchor="middle" fontSize="6.600" fontWeight="800" fontFamily={UI} fill="#fff">ABP</text></Svg></NavIcon>
            <NavIcon><Svg stroke="#6c6c6e" strokeWidth="1.300"><path d="M6 12.500H1V2.500h12v5" /><path d="M1 4h12" /><rect x="7.500" y="8" width="7" height="7" fill="#6c6c6e" /><path d="M9.300 9.800l3.400 3.400M12.700 9.800l-3.400 3.400" stroke="#323234" /></Svg></NavIcon>
            <NavIcon><Svg><circle cx="8" cy="8" r="7.200" fill="#f4f5f8" stroke="#4a9ae0" strokeWidth="1.500" /><circle cx="8" cy="8" r="4.800" stroke="#a03236" strokeWidth="1.200" /><path d="M4.700 4.700l6.600 6.600" stroke="#a03236" strokeWidth="1.600" /></Svg></NavIcon>
            <NavIcon><Svg><path d="M3 2v7.500h4M7 3h7M10.500 3v7" stroke="#fff" strokeWidth="1.700" /><path d="M1 13c1.500-1.800 3-1.800 4.500 0s3 1.600 4.500 0 3-1.800 4.800 0" stroke="#fff" strokeWidth="1.500" /></Svg></NavIcon>
            <ToolRule />
            <NavIcon><Svg stroke="#d6d6d8" strokeWidth="1.700"><path d="M2 2.500h12M2 8h12M2 13.500h12" /></Svg></NavIcon>
          </Tools>
        </NavBar>

        <Bookmarks>
          {bookmarks.map(([name, icon, w]) => <Bookmark key={name} $w={w}>{icon}{name}</Bookmark>)}
          <Bookmark $w={129} $end><Folder />Weitere Lesezeichen</Bookmark>
        </Bookmarks>

        <Page>
          <Card>
            <CardHeader>
              <Company>Christian Knedel</Company>
              <Steps>{[1, 2, 3, 4].map((n) => <Step key={n} $active={n === 1}>{n}</Step>)}</Steps>
            </CardHeader>
            <CardBody>
              <Title>Select Service &amp; Provider</Title>
              <Label $mt={32}>Select Service</Label>
              <Select>Test Service<Caret /></Select>
              <Label $mt={32}>Select Provider</Label>
              <Select>John Doe<Caret /></Select>
              <Description>
                <b>Test Service</b><br />
                This is a test service automatically inserted by the installer.<br />
                [Duration 30 Minutes][Price 50.00 Euro]
              </Description>
              <NextRow>
                <NextButton>Next<Svg w={12} h={12}><path d="M0 .5l5.500 5V.5L12 6l-6.500 5.500v-5l-5.500 5z" fill="#fff" /></Svg></NextButton>
              </NextRow>
            </CardBody>
            <Footer>
              <span>Powered By</span><Link>Easy!Appointments</Link><span>|</span><Language>English</Language><span>|</span><Link>Backend Section</Link>
            </Footer>
          </Card>
        </Page>
      </Window>

      <DockArea>
        <Wallpaper width="1920" height="62" viewBox="0 0 1920 62" fill="none">
          <defs><filter id="soft"><feGaussianBlur stdDeviation="2.500" /></filter></defs>
          <g filter="url(#soft)">
            <path d="M0 8l90-4-30 38-60 10z" fill="#201f20" />
            <path d="M70 28L254 16v20L55 45z" fill="#2b2526" />
            <path d="M0 62l60-16 194-6v22z" fill="#12111a" />
            <path d="M1835 0h22v50h-22z" fill="#242331" />
            <path d="M1780 62l90-12 50-10v22z" fill="#35263b" />
          </g>
          <path d="M1804 62l92-16" stroke="#8a6d86" strokeWidth="1.500" />
        </Wallpaper>
        <Dock>
          {dockLeft.map((a, i) => <DockApp key={i} {...a} />)}
          <DockGap $w={22} />
          {dockMid.map((a, i) => <DockApp key={i} {...a} />)}
          <DockGap $w={21} />
          {dockRight.map((a, i) => <DockApp key={i} {...a} />)}
        </Dock>
      </DockArea>
    </Desktop>
  );
}
